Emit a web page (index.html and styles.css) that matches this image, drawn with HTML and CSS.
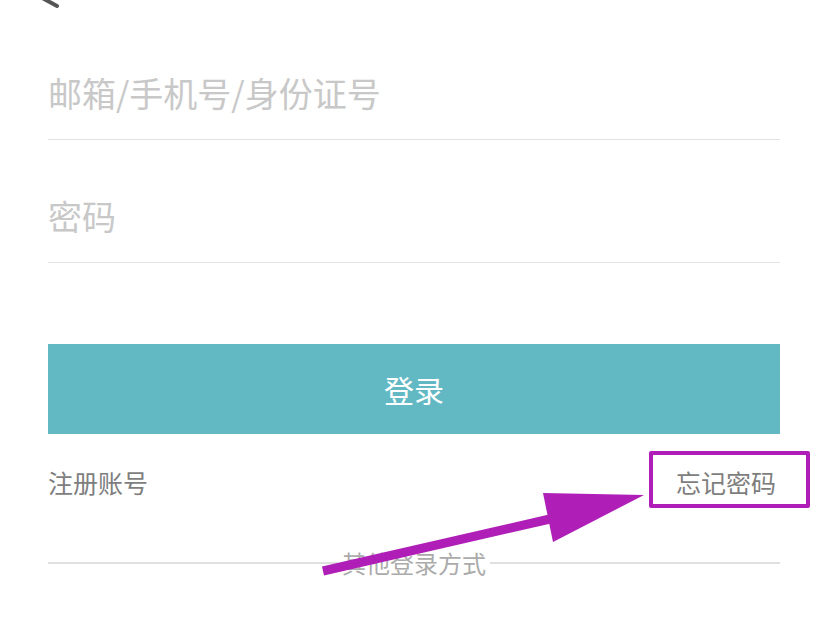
FILE: index.html
```html
<!DOCTYPE html>
<html lang="zh-CN">
<head>
<meta charset="utf-8">
<title>登录</title>
<link rel="stylesheet" href="styles.css">
</head>
<body>
<div class="page">
  <div class="topbar">
    <svg class="back" width="32" height="30" viewBox="0 0 32 30"><path d="M27 2 L5 14 L27 26" fill="none" stroke="#555" stroke-width="4" stroke-linecap="round" stroke-linejoin="round"/></svg>
  </div>
  <div class="field"><span class="placeholder">邮箱/手机号/身份证号</span></div>
  <div class="field"><span class="placeholder">密码</span></div>
  <button class="login">登录</button>
  <div class="links">
    <span class="link">注册账号</span>
    <span class="link forgot">忘记密码</span>
  </div>
  <div class="divider"><span class="divider-text">其他登录方式</span></div>
</div>
<svg class="annot" width="828" height="621" viewBox="0 0 828 621">
  <path d="M323 571 L550 519" stroke="#b01eb8" stroke-width="9" fill="none"/>
  <polygon points="543,493 644,495 553,542" fill="#b01eb8"/>
</svg>
</body>
</html>
```

FILE: styles.css
```css
* { box-sizing: border-box; }
html, body { margin: 0; padding: 0; background: #fff; }
body {
  font-family: "Noto Sans CJK SC", "Noto Sans", sans-serif;
  width: 828px;
  height: 621px;
  overflow: hidden;
  position: relative;
}
.page {
  padding: 0 48px;
}
.topbar {
  height: 17px;
  display: flex;
  align-items: flex-start;
}
.back {
  display: block;
  flex: none;
  margin-top: -20px;
  margin-left: -18px;
}
.field {
  height: 123px;
  padding-top: 51px;
  border-bottom: 1.5px solid #e2e2e2;
}
.placeholder {
  display: block;
  font-size: 34px;
  line-height: 50px;
  color: #c8c8c8;
}
.login {
  display: block;
  width: 100%;
  height: 90px;
  margin-top: 81px;
  border: none;
  background: #62b9c4;
  color: #fff;
  font-family: inherit;
  font-size: 30px;
  padding: 0;
}
.links {
  margin-top: 30px;
  height: 36px;
  display: flex;
  justify-content: space-between;
  align-items: center;
  padding-right: 4px;
}
.link {
  font-size: 25px;
  line-height: 36px;
  color: #7e7e7e;
}
.forgot {
  position: relative;
}
.forgot::after {
  content: "";
  position: absolute;
  left: -27px;
  right: -34px;
  top: -13px;
  bottom: -8px;
  border: 4px solid #b01eb8;
  border-radius: 2px;
}
.divider {
  margin-top: 50px;
  height: 26px;
  display: flex;
  align-items: center;
  gap: 4px;
}
.divider::before, .divider::after {
  content: "";
  flex: 1;
  height: 1.5px;
  background: #e0e0e0;
}
.divider-text {
  font-size: 24px;
  line-height: 26px;
  color: #ababab;
}
.annot {
  position: absolute;
  left: 0;
  top: 0;
  pointer-events: none;
}
```
